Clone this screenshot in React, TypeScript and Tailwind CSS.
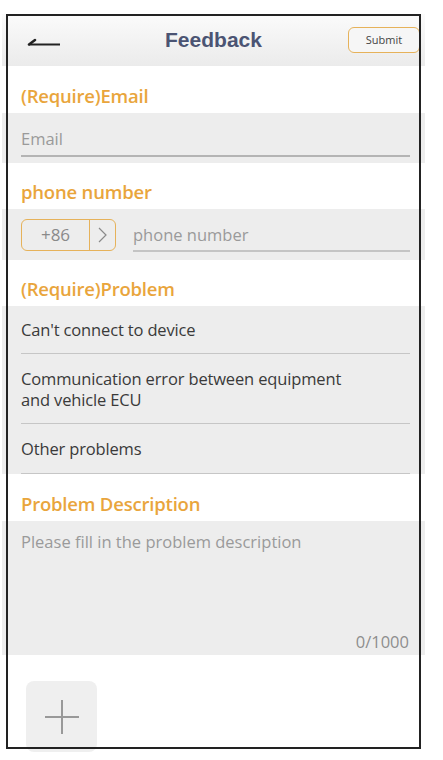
const FONT = { fontFamily: '"Open Sans", "Liberation Sans", Arial, sans-serif' }

// Section heading in orange
function Label({ text, h }: { text: string; h: string }) {
  return (
    <div className={`flex items-end pb-[6px] px-[19px] bg-white ${h}`}>
      <span className="text-[18.5px] leading-[22px] font-semibold text-[#e9a53c] tracking-[-0.2px]">{text}</span>
    </div>
  )
}

const PROBLEMS = [
  { text: "Can't connect to device", h: 'h-[48px]' },
  { text: 'Communication error between equipment and vehicle ECU', h: 'h-[70px]' },
  { text: 'Other problems', h: 'h-[50px]' },
]

export default function App() {
  return (
    <div className="relative w-[443px] h-[760px] bg-white overflow-hidden" style={FONT}>
      <div className="ml-[2px] w-[423px] pt-[14px]">
        {/* Header */}
        <div className="h-[52px] grid grid-cols-[1fr_auto_1fr] items-center bg-gradient-to-b from-[#fbfbfb] to-[#ebebeb] px-[5px]">
          <svg width="34" height="10" viewBox="0 0 34 10" className="mt-[2px] ml-[20px]">
            <path d="M2 8.5 L33 8.5" stroke="#222" strokeWidth="2" />
            <path d="M2 8.5 L8 4" stroke="#222" strokeWidth="2.5" strokeLinecap="round" />
          </svg>
          <span className="text-[21px] font-bold text-[#4b5473]" style={{ fontFamily: '"Liberation Sans", Arial, sans-serif' }}>
            Feedback
          </span>
          <div className="flex justify-end">
            <button className="w-[72px] h-[26px] rounded-[6px] border-[1.5px] border-[#e6b25a] bg-[#f6f6f6] text-[11px] text-[#444]">
              Submit
            </button>
          </div>
        </div>

        {/* Email */}
        <Label text="(Require)Email" h="h-[47px]" />
        <div className="h-[50px] bg-[#ededed] pl-[19px] pr-[15px] flex flex-col justify-end pb-[6px]">
          <div className="border-b-2 border-[#b4b4b4] pb-[5px] text-[16.5px] leading-[22px] text-[#9a9a9a]">Email</div>
        </div>

        {/* Phone */}
        <Label text="phone number" h="h-[46px]" />
        <div className="h-[51px] bg-[#ededed] pl-[19px] pr-[15px] flex items-center gap-[17px]">
          <div className="flex h-[32px] w-[95px] rounded-[6px] border border-[#e6b25a] text-[#8a8a8a]">
            <div className="flex-1 flex items-center justify-center text-[17px]">+86</div>
            <div className="w-[26px] border-l border-[#e6b25a] flex items-center justify-center">
              <svg width="9" height="16" viewBox="0 0 9 16">
                <path d="M1 1 L8 8 L1 15" fill="none" stroke="#8a8a8a" strokeWidth="1.2" />
              </svg>
            </div>
          </div>
          <div className="flex-1 self-end mb-[8px] border-b-2 border-[#c4c4c4] pb-[4px] text-[16.5px] leading-[22px] text-[#9a9a9a]">
            phone number
          </div>
        </div>

        {/* Problem */}
        <Label text="(Require)Problem" h="h-[46px]" />
        <div className="bg-[#ededed] pl-[19px] pr-[15px]">
          {PROBLEMS.map((p) => (
            <div
              key={p.text}
              className={`${p.h} flex flex-col justify-center border-b border-[#c6c6c6] text-[16.5px] leading-[21px] text-[#3a3a3a]`}
            >
              <p className="max-w-[330px] tracking-[-0.15px]">{p.text}</p>
            </div>
          ))}
        </div>

        {/* Description */}
        <Label text="Problem Description" h="h-[47px]" />
        <div className="h-[134px] bg-[#ededed] pl-[19px] pr-[16px] pt-[10px] pb-[2px] flex flex-col justify-between">
          <span className="text-[16.5px] leading-[22px] text-[#9a9a9a]">Please fill in the problem description</span>
          <span className="self-end text-[16.5px] leading-[22px] text-[#8e8e8e]">0/1000</span>
        </div>

        {/* Add picture */}
        <div className="pt-[26px] pl-[24px]">
          <div className="w-[71px] h-[71px] rounded-[8px] bg-[#efefef] flex items-center justify-center">
            <svg width="36" height="36" viewBox="0 0 36 36">
              <path d="M18 1 V35 M1 18 H35" stroke="#999" strokeWidth="2" />
            </svg>
          </div>
        </div>
      </div>

      {/* Frame drawn over the screenshot */}
      <div className="absolute left-[6px] top-[14px] w-[415px] h-[735px] border-2 border-[#222] pointer-events-none" />
    </div>
  )
}
